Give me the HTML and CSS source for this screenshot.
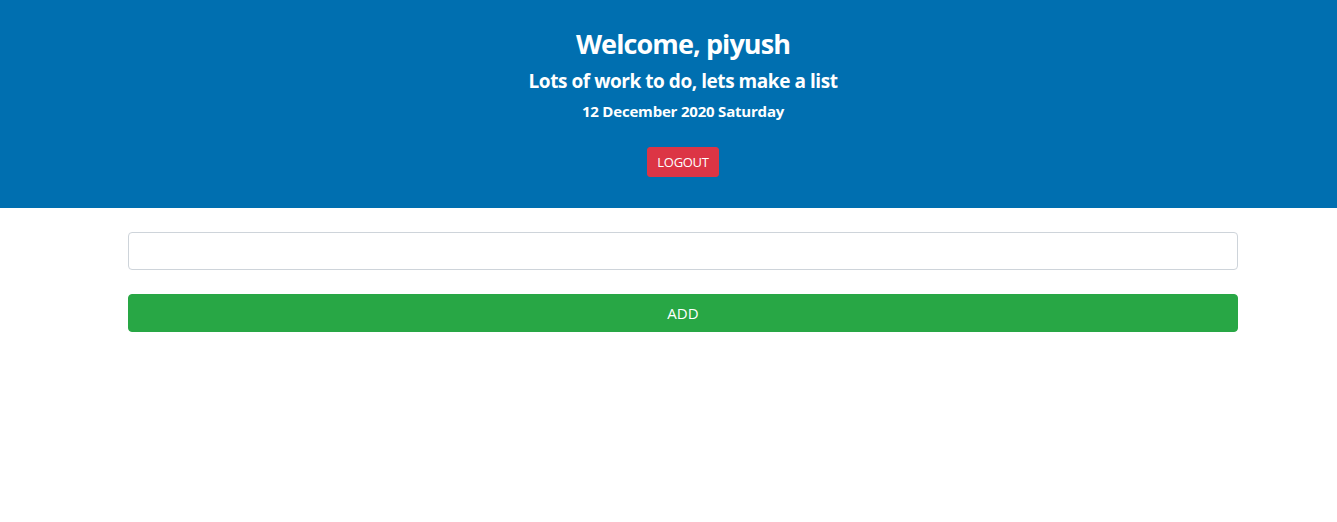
FILE: index.html
```html
<!DOCTYPE html>
<html>
<head>
<meta charset="utf-8">
<link rel="stylesheet" href="styles.css">
</head>
<body>
<div class="page">
  <header class="hero">
    <h3 class="title">Welcome, piyush</h3>
    <h5 class="subtitle">Lots of work to do, lets make a list</h5>
    <h6 class="date">12 December 2020 Saturday</h6>
    <button class="btn-logout">LOGOUT</button>
  </header>
  <main class="container">
    <input class="task-input" type="text">
    <button class="btn-add">ADD</button>
  </main>
</div>
</body>
</html>
```
FILE: styles.css
```css
* { box-sizing: border-box; }
html, body { overflow: hidden; }
body {
  margin: 0;
  font-family: "Open Sans", "Noto Sans", sans-serif;
  color: #212529;
  background: #fff;
}
.page {
  width: 1366px;
}
.hero {
  background: #006fb0;
  color: #fff;
  display: flex;
  flex-direction: column;
  align-items: center;
  padding: 28px 0 30px;
  height: 208px;
}
.title {
  margin: 0 0 9px;
  font-size: 27px;
  line-height: 1.2;
  font-weight: 700;
  letter-spacing: -0.9px;
}
.subtitle {
  margin: 0 0 9px;
  font-size: 19px;
  line-height: 24px;
  font-weight: 700;
  letter-spacing: -0.45px;
}
.date {
  margin: 0 0 26px;
  font-size: 15px;
  line-height: 19px;
  font-weight: 700;
  letter-spacing: -0.2px;
}
.btn-logout {
  background: #dc3545;
  color: #fff;
  border: 1px solid #dc3545;
  border-radius: 3px;
  font-family: inherit;
  font-size: 13px;
  line-height: 20px;
  padding: 4px 8px;
  height: 30px;
  width: 72px;
  letter-spacing: -0.3px;
}
.container {
  width: 1110px;
  margin: 24px auto 0;
  display: flex;
  flex-direction: column;
  gap: 24px;
}
.task-input {
  height: 38px;
  width: 100%;
  border: 1px solid #ced4da;
  border-radius: 4px;
  padding: 6px 12px;
  font-size: 16px;
  font-family: inherit;
}
.btn-add {
  height: 38px;
  width: 100%;
  background: #28a745;
  border: 1px solid #28a745;
  border-radius: 4px;
  color: #fff;
  font-family: inherit;
  font-size: 15px;
}
```
